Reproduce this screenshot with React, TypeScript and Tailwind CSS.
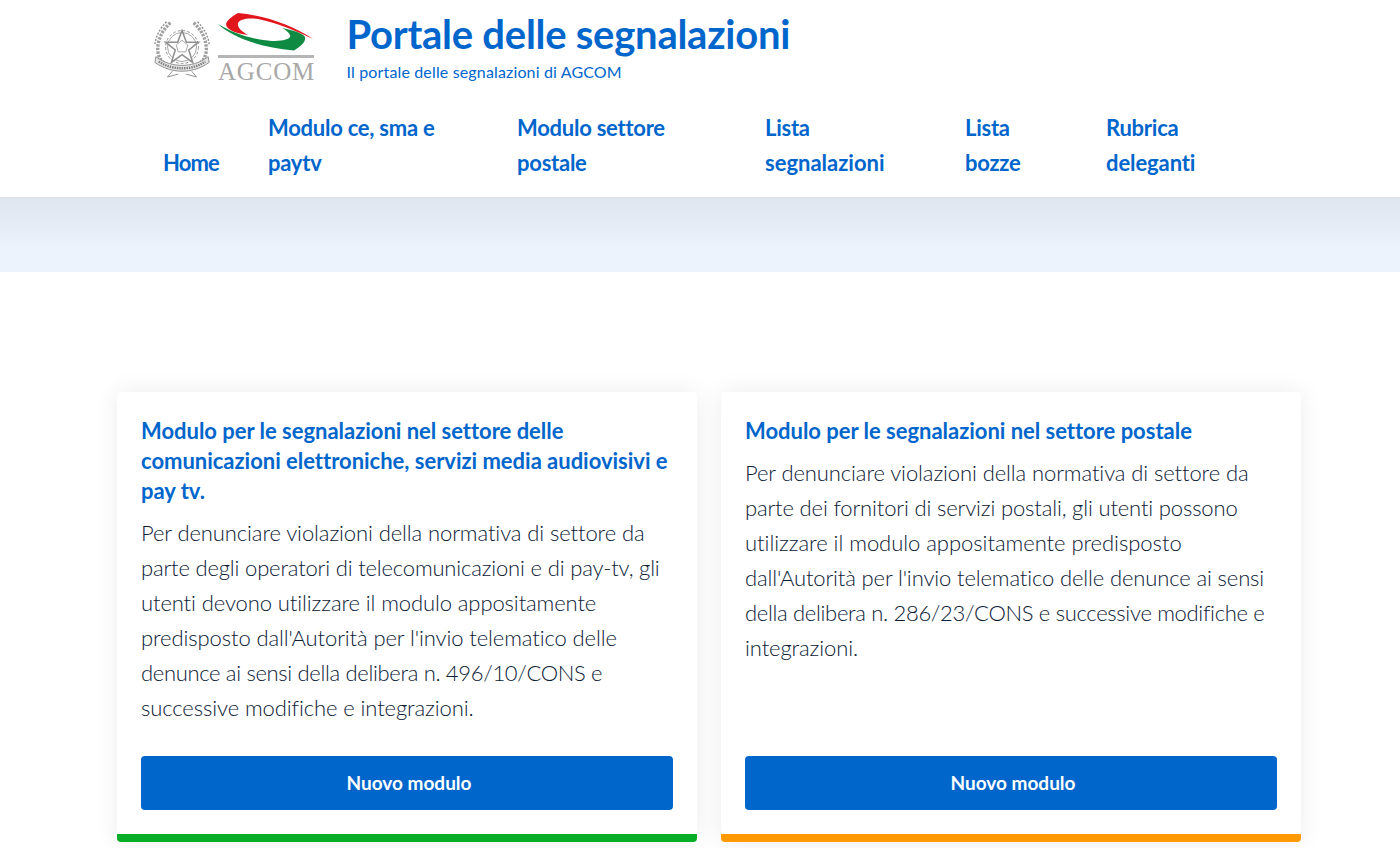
const blue = "text-[#0066cc]";

function Logo() {
  return (
    <div className="flex h-[72px] w-[165px] shrink-0 items-start">
      <svg width="60" height="72" viewBox="0 0 62 72" className="ml-[3px] shrink-0" fill="none" stroke="#8f8f8f">
        <circle cx="30" cy="36" r="17" strokeWidth="1" strokeDasharray="3 2" />
        <circle cx="30" cy="36" r="15" strokeWidth="0.8" />
        <polygon points="30,19 34.5,31 47,31 37,39 41,52 30,44 19,52 23,39 13,31 25.5,31" fill="#fff" strokeWidth="1.6" />
        <polygon points="30,29 36,34 34,41 26,41 24,34" strokeWidth="0.8" />
        <path d="M18 11 C9 19 4 30 5 41 C6 47 9 51 13 54" strokeWidth="3.5" strokeDasharray="2.5 1.2" stroke="#a0a0a0" />
        <path d="M42 11 C51 19 56 30 55 41 C54 47 51 51 47 54" strokeWidth="3.5" strokeDasharray="2.5 1.2" stroke="#a0a0a0" />
        <path d="M14 10 C7 17 3 25 2 33" strokeWidth="1.5" strokeDasharray="2 1.5" />
        <path d="M46 10 C53 17 57 25 58 33" strokeWidth="1.5" strokeDasharray="2 1.5" />
        <path d="M3 46 C12 53 22 55 30 55 C38 55 48 53 57 46 L58 52 C48 59 38 61 30 61 C22 61 12 59 2 52 Z" fill="#e4e4e4" strokeWidth="1" />
        <path d="M6 51 C13 56 22 58 30 58 C38 58 47 56 54 51" stroke="#808080" strokeWidth="2.4" strokeDasharray="1.5 1" />
        <path d="M20 61 L15 67 L26 64 M40 61 L45 67 L34 64" strokeWidth="1" />
      </svg>
      <div className="ml-[5px] flex w-[97px] flex-col">
        <svg width="97" height="42" viewBox="0 0 97 42" className="mt-[1px]">
          <path d="M20 1 C45 3 75 13 95 27 C78 19 60 11 40 7 C30 5.5 22 7 20 11 C19 15 23 19 30 23 C22 22 13 20 9 15 C6 11 11 6 20 1 Z" fill="#e2161d" />
          <path d="M0 12 C14 25 40 35 76 38.5 C83 34 88 30 87 25 C85 21 74 18 64 16 C70 19 73 23 72 25 C70 28 62 29 54 29 C36 28 14 21 0 12 Z" fill="#0f8a43" />
        </svg>
        <div className="mt-[1px] h-[3px] w-[96px] bg-[#b5b5b5]" />
        <div className="font-['Liberation_Serif',serif] text-[25px] leading-[28px] tracking-[0.8px] text-[#a8a8a8]">AGCOM</div>
      </div>
    </div>
  );
}

const navItems = [
  { w: "w-[105px]", lines: [{ t: "Home", c: "tracking-[-0.9px]" }] },
  { w: "w-[249px]", lines: [{ t: "Modulo ce, sma e", c: "" }, { t: "paytv", c: "" }] },
  { w: "w-[248px]", lines: [{ t: "Modulo settore", c: "" }, { t: "postale", c: "" }] },
  { w: "w-[200px]", lines: [{ t: "Lista", c: "" }, { t: "segnalazioni", c: "tracking-[0px]" }] },
  { w: "w-[141px]", lines: [{ t: "Lista", c: "" }, { t: "bozze", c: "" }] },
  { w: "w-[140px]", lines: [{ t: "Rubrica", c: "" }, { t: "deleganti", c: "tracking-[-0.1px]" }] },
];

function Card({ title, body, color }: { title: string[]; body: { t: string; c?: string }[]; color: string }) {
  return (
    <div className={`flex h-[450px] w-[580px] flex-col rounded-[4px] border-b-[8px] bg-white px-6 pt-6 shadow-[0_0_24px_rgba(0,0,0,0.08)] ${color}`}>
      <h5 className={`text-[22px] font-bold leading-[30px] tracking-[-0.02px] ${blue}`}>
        {title.map((t) => (
          <span key={t} className="block whitespace-nowrap">{t}</span>
        ))}
      </h5>
      <p className="mt-[9px] text-[22px] font-light leading-[35px] tracking-[-0.1px] text-[#0b2036]">
        {body.map((l) => (
          <span key={l.t} className={`block whitespace-nowrap ${l.c ?? ""}`}>{l.t}</span>
        ))}
      </p>
      <button className="mt-auto mb-6 h-[54px] w-full rounded-[4px] bg-[#0066cc] pl-1 text-[19px] font-bold text-white">
        Nuovo modulo
      </button>
    </div>
  );
}

export default function App() {
  return (
    <div className="min-h-[848px] overflow-hidden bg-white font-['Lato',sans-serif]">
      <header className="h-[197px] bg-white pl-[150px]">
        <div className="flex h-[110px] items-start pt-[11px]">
          <Logo />
          <div className="ml-[31.5px] -mt-[1px]">
            <h1 className={`whitespace-nowrap text-[40px] font-bold leading-[48px] tracking-[-0.26px] ${blue}`}>Portale delle segnalazioni</h1>
            <p className={`mt-[2px] text-[16px] leading-[24px] tracking-[0.15px] ${blue}`}>Il portale delle segnalazioni di AGCOM</p>
          </div>
        </div>
        <nav className={`flex items-end pl-[13px] text-[22px] font-bold leading-[35px] tracking-[-0.25px] ${blue}`}>
          {navItems.map((n) => (
            <a key={n.lines[0].t + (n.lines[1]?.t ?? "")} className={`block shrink-0 ${n.w}`}>
              {n.lines.map((l) => (
                <span key={l.t} className={`block whitespace-nowrap ${l.c}`}>{l.t}</span>
              ))}
            </a>
          ))}
        </nav>
      </header>
      <div className="h-[75px] bg-gradient-to-b from-[#dfe5ee] to-[#ecf3fc] to-70%" />
      <main className="flex gap-6 pl-[117px] pt-[120px]">
        <Card
          color="border-[#09ae28]"
          title={[
            "Modulo per le segnalazioni nel settore delle",
            "comunicazioni elettroniche, servizi media audiovisivi e",
            "pay tv.",
          ]}
          body={[
            { t: "Per denunciare violazioni della normativa di settore da" },
            { t: "parte degli operatori di telecomunicazioni e di pay-tv, gli", c: "tracking-[-0.17px]" },
            { t: "utenti devono utilizzare il modulo appositamente" },
            { t: "predisposto dall'Autorità per l'invio telematico delle" },
            { t: "denunce ai sensi della delibera n. 496/10/CONS e", c: "tracking-[-0.33px]" },
            { t: "successive modifiche e integrazioni." },
          ]}
        />
        <Card
          color="border-[#ff9900]"
          title={["Modulo per le segnalazioni nel settore postale"]}
          body={[
            { t: "Per denunciare violazioni della normativa di settore da" },
            { t: "parte dei fornitori di servizi postali, gli utenti possono", c: "tracking-[-0.15px]" },
            { t: "utilizzare il modulo appositamente predisposto", c: "tracking-[-0.04px]" },
            { t: "dall'Autorità per l'invio telematico delle denunce ai sensi", c: "tracking-[-0.13px]" },
            { t: "della delibera n. 286/23/CONS e successive modifiche e", c: "tracking-[-0.32px]" },
            { t: "integrazioni." },
          ]}
        />
      </main>
    </div>
  );
}
